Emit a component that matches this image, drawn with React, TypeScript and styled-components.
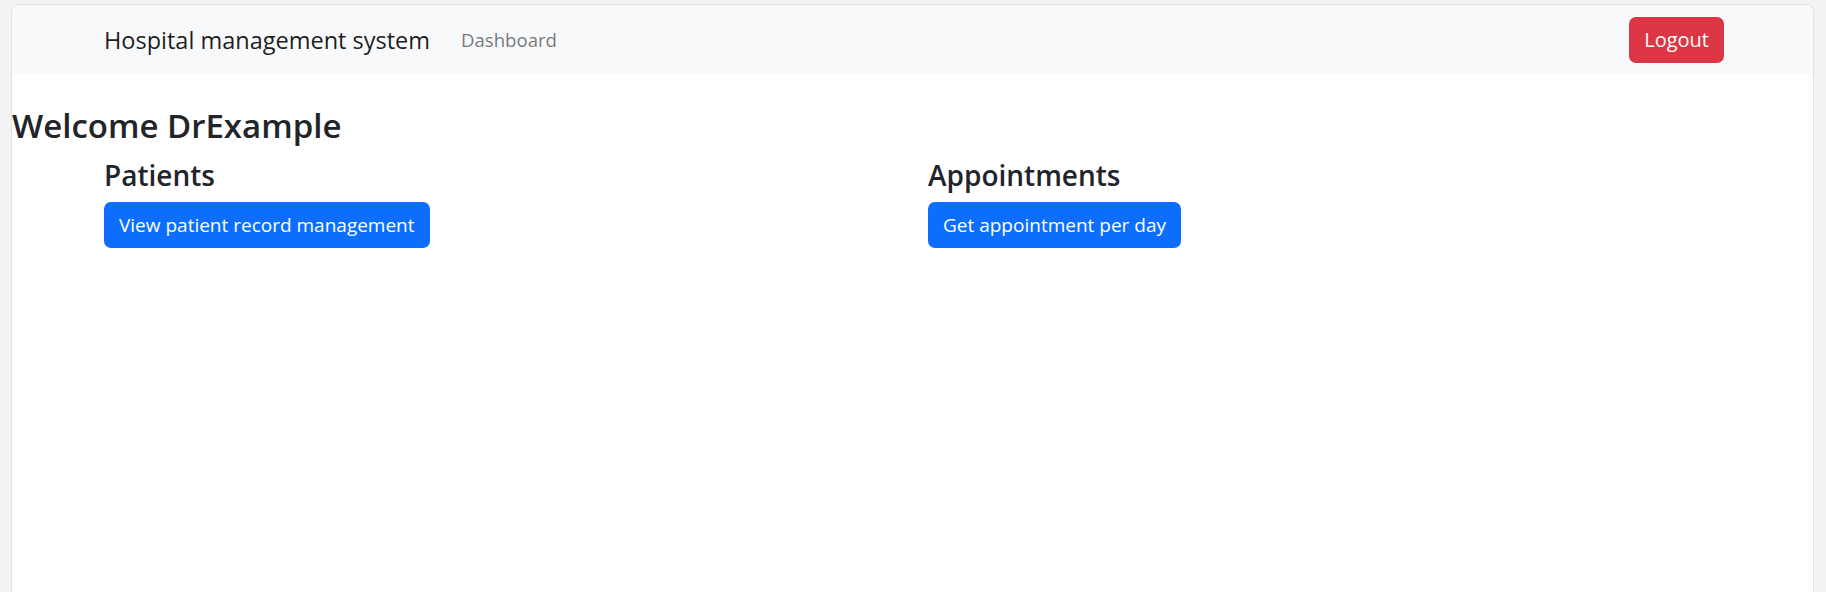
import React from "react";
import styled, { createGlobalStyle } from "styled-components";

const Global = createGlobalStyle`
  html, body { margin: 0; padding: 0; background: #f3f3f3; }
  body { font-family: "Open Sans", "Noto Sans", Arial, sans-serif; color: #212529; }
  * { box-sizing: border-box; }
`;

const Frame = styled.div`
  margin: 4px 12px 0 11px;
  height: 588px;
  background: #ffffff;
  border: 1px solid #e2e2e2;
  border-bottom: none;
  border-radius: 8px 8px 0 0;
  overflow: hidden;
`;

const Navbar = styled.nav`
  height: 69px;
  background: #f8f9fa;
  display: flex;
  align-items: center;
  padding: 0 89px 0 92px;
`;

const Brand = styled.a`
  font-size: 23.5px;
  color: rgba(0, 0, 0, 0.9);
  text-decoration: none;
  margin-right: 31px;
  white-space: nowrap;
`;

const NavLink = styled.a`
  font-size: 18.6px;
  color: rgba(0, 0, 0, 0.55);
  text-decoration: none;
`;

const Button = styled.button<{ $variant: "primary" | "danger" }>`
  height: 46px;
  padding: 0 15px;
  border: none;
  border-radius: 7px;
  font-family: inherit;
  font-size: 19px;
  color: #ffffff;
  background: ${(p) => (p.$variant === "danger" ? "#dc3545" : "#0d6efd")};
  cursor: pointer;
  white-space: nowrap;
`;

const LogoutButton = styled(Button)`
  height: 46px;
  font-size: 20px;
  margin-left: auto;
`;

const Welcome = styled.h2`
  margin: 32px 0 13px 0;
  font-size: 33px;
  font-weight: 600;
  line-height: 1.2;
`;

const Sections = styled.div`
  display: grid;
  grid-template-columns: 824px 1fr;
  padding-left: 92px;
`;

const Section = styled.section`
  display: flex;
  flex-direction: column;
  align-items: flex-start;
`;

const SectionTitle = styled.h4`
  margin: 0 0 10px 0;
  font-size: 28px;
  font-weight: 600;
  line-height: 1.2;
`;

export default function App() {
  return (
    <>
      <Global />
      <Frame>
        <Navbar>
          <Brand href="#">Hospital management system</Brand>
          <NavLink href="#">Dashboard</NavLink>
          <LogoutButton $variant="danger">Logout</LogoutButton>
        </Navbar>
        <Welcome>Welcome DrExample</Welcome>
        <Sections>
          <Section>
            <SectionTitle>Patients</SectionTitle>
            <Button $variant="primary">View patient record management</Button>
          </Section>
          <Section>
            <SectionTitle>Appointments</SectionTitle>
            <Button $variant="primary">Get appointment per day</Button>
          </Section>
        </Sections>
      </Frame>
    </>
  );
}
